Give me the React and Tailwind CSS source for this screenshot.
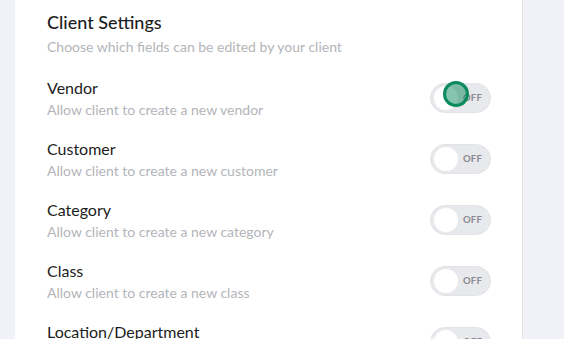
import React from "react";

const rows = [
  { label: "Vendor", desc: "Allow client to create a new vendor", focus: true },
  { label: "Customer", desc: "Allow client to create a new customer" },
  { label: "Category", desc: "Allow client to create a new category" },
  { label: "Class", desc: "Allow client to create a new class" },
  { label: "Location/Department", desc: "Allow client to create a new location" },
];

function Toggle({ focus }) {
  return (
    <div className="relative flex items-center gap-[5px] w-[61px] h-[30px] mt-[7px] pl-[3px] rounded-full bg-[#e8e9ec] border border-[#e2e3e6] shrink-0">
      <div className="w-[24px] h-[24px] rounded-full bg-white"></div>
      <span className="text-[9.5px] leading-[12px] font-bold text-[#878a90] tracking-[0.02em]">OFF</span>
      {focus && (
        <div className="absolute left-[12px] top-[-3px] w-[26px] h-[26px] rounded-full border-[3px] border-[#0b8a5e] bg-[#0b8a5e]/50"></div>
      )}
    </div>
  );
}

export default function App() {
  return (
    <div className="w-[564px] h-[339px] bg-[#f1f2f7] overflow-hidden" style={{ fontFamily: "Lato, 'Noto Sans', sans-serif" }}>
      <div className="ml-[15px] w-[508px] h-[339px] bg-white border-r border-[#e2e2e6] pl-[32px] pr-[31px] pt-[10px]">
        <h1 className="text-[18px] leading-[24px] text-[#1c1d21] font-medium">Client Settings</h1>
        <p className="mt-[4px] text-[14px] leading-[18px] text-[#b3b5ba]">Choose which fields can be edited by your client</p>
        <div className="mt-[20px] flex flex-col gap-[16px]">
          {rows.map((r) => (
            <div key={r.label} className="flex items-start justify-between">
              <div>
                <div className="text-[16px] leading-[23px] text-[#1c1d21]">{r.label}</div>
                <div className="text-[14px] leading-[22px] text-[#b3b5ba]">{r.desc}</div>
              </div>
              <Toggle focus={r.focus} />
            </div>
          ))}
        </div>
      </div>
    </div>
  );
}
